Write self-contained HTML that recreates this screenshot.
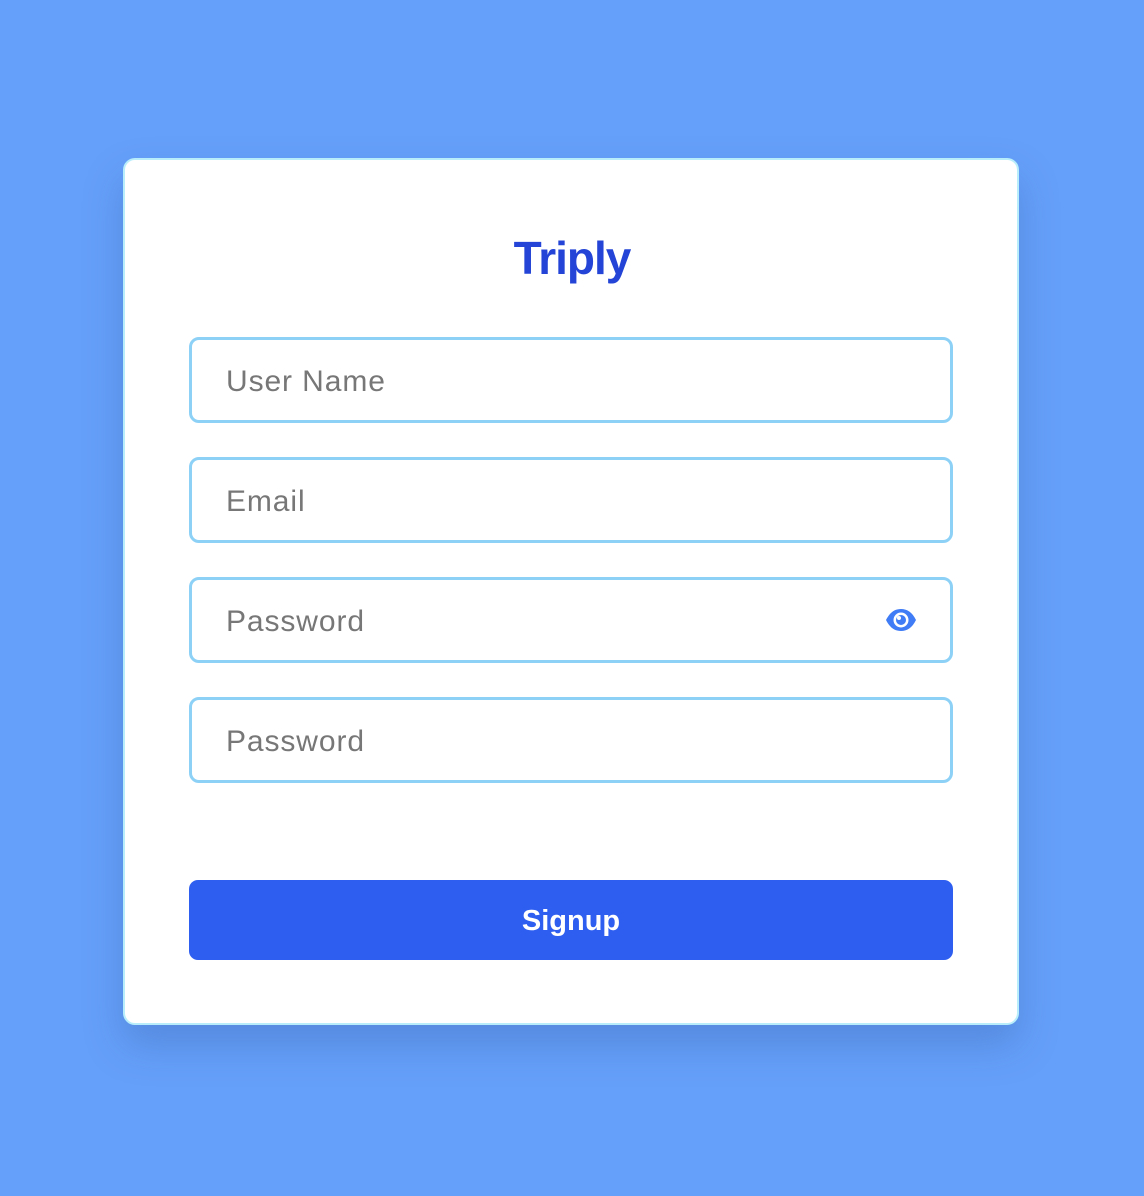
<!DOCTYPE html>
<html><head><style>
html,body{margin:0;padding:0}
body{width:1144px;height:1196px;background:#65a0fa;position:relative;font-family:"Liberation Sans",Arial,sans-serif;overflow:hidden}
.card{position:absolute;left:123px;top:158px;width:892px;height:863px;background:#fff;border:2px solid #b8eefb;border-radius:12px;box-shadow:0 20px 40px rgba(40,70,140,.25)}
h1{position:absolute;left:0;right:0;top:228px;margin:0;text-align:center;font-size:46px;font-weight:bold;color:#2344d6;letter-spacing:-1px;line-height:60px}
.in{position:absolute;left:189px;width:758px;height:80px;border:3px solid #8dd1f7;border-radius:10px;background:#fff}
.in span{position:absolute;left:34px;top:2px;line-height:80px;font-size:30px;letter-spacing:0.9px;color:#777}
.btn{position:absolute;left:189px;top:880px;width:764px;height:80px;background:#2e5ef0;border-radius:9px;color:#fff;font-size:29px;font-weight:bold;text-align:center;line-height:82px}
</style></head><body>
<div class="card"></div>
<h1>Triply</h1>
<div class="in" style="top:337px"><span>User Name</span></div>
<div class="in" style="top:457px"><span>Email</span></div>
<div class="in" style="top:577px"><span>Password</span>
<svg style="position:absolute;left:693px;top:28px" width="32" height="24" viewBox="0 0 32 24"><path d="M1 12C5 4 10 1 16 1S27 4 31 12C27 20 22 23 16 23S5 20 1 12Z" fill="#3f7cf5"/><circle cx="16" cy="12" r="7.5" fill="#fff"/><circle cx="16" cy="12" r="5" fill="#3f7cf5"/><circle cx="14" cy="10" r="2" fill="#fff"/></svg>
</div>
<div class="in" style="top:697px"><span>Password</span></div>
<div class="btn">Signup</div>
</body></html>
